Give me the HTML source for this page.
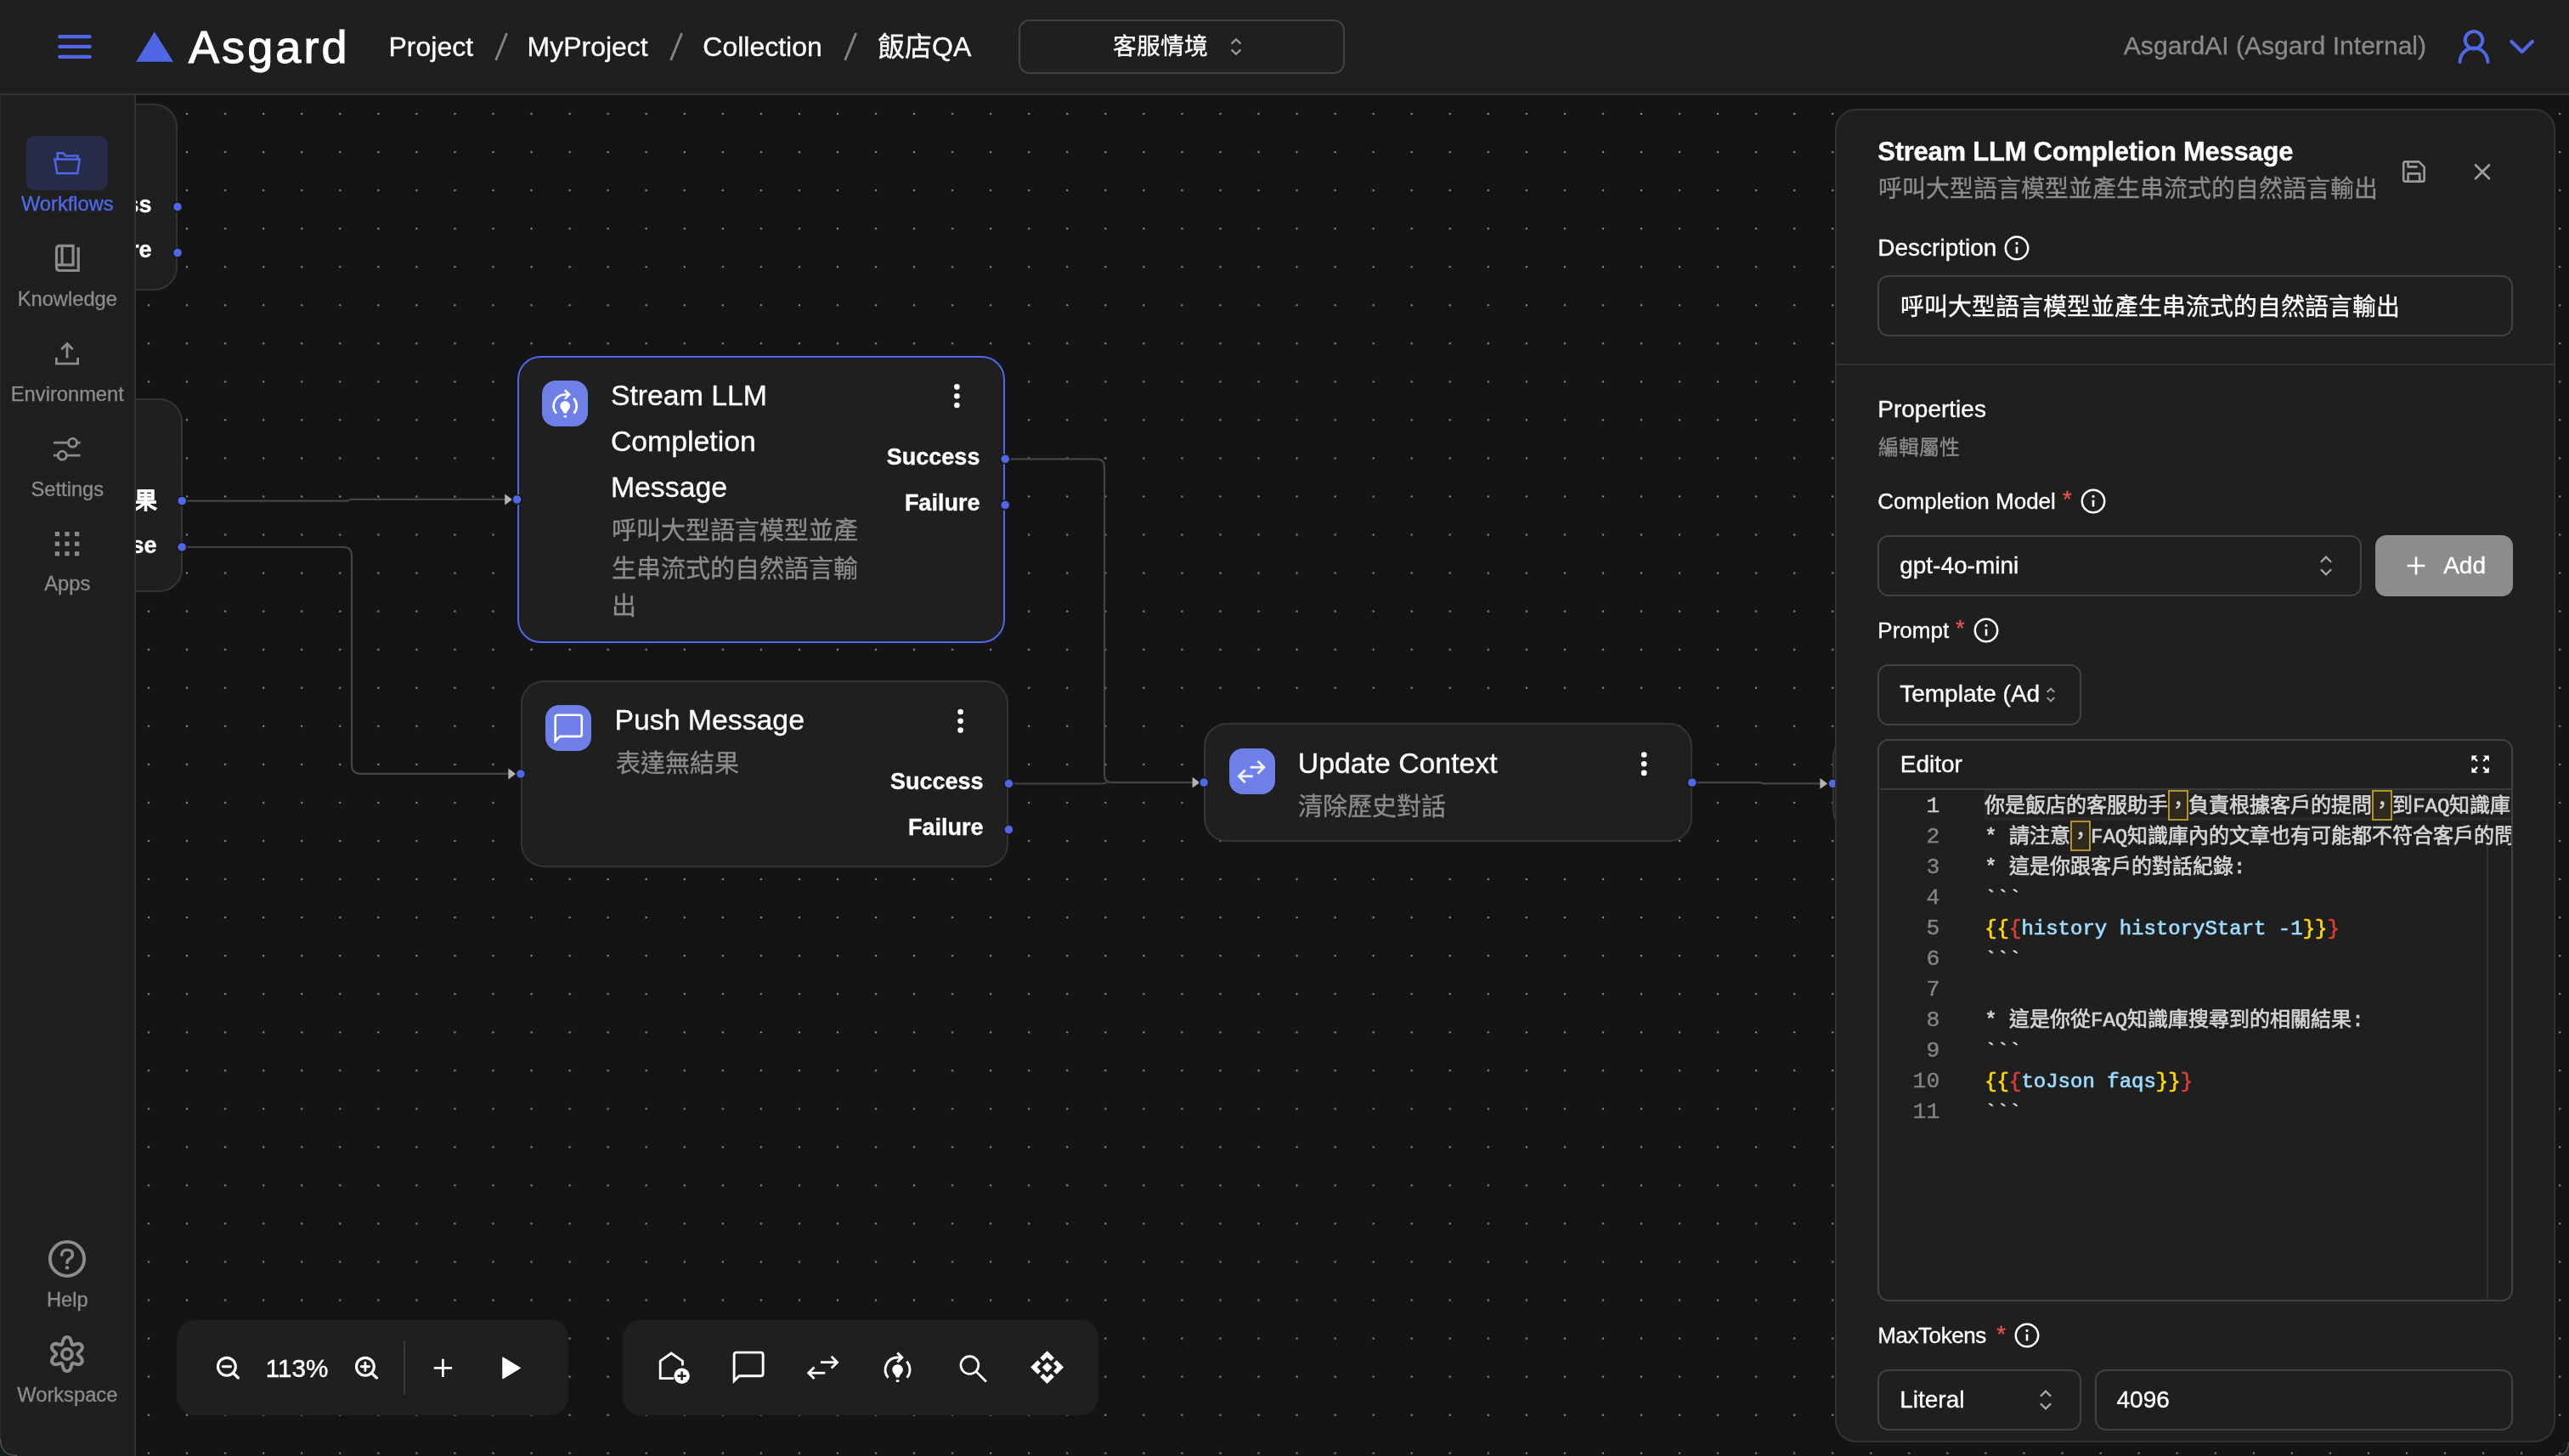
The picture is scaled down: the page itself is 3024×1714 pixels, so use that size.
<!DOCTYPE html>
<html lang="zh-TW"><head><meta charset="utf-8"><title>Asgard</title>
<style>
html,body{margin:0;padding:0;}
body{width:3024px;height:1714px;overflow:hidden;background:#141414;font-family:"Liberation Sans", sans-serif;position:relative;-webkit-font-smoothing:antialiased;-webkit-text-stroke:0.02em;}
div,svg{box-sizing:border-box;}
</style></head><body>
<div id="root" style="position:absolute;left:0;top:0;width:3024px;height:1714px;will-change:transform;">
<svg style="position:absolute;left:0;top:0" width="3024" height="1714">
<defs><pattern id="dots" x="197.575" y="111.475" width="45.05" height="45.05" patternUnits="userSpaceOnUse">
<circle cx="22.525" cy="22.525" r="1.22" fill="#8a8a8a"/></pattern></defs>
<rect width="3024" height="1714" fill="url(#dots)"/></svg>
<svg style="position:absolute;left:0;top:0" width="3024" height="1714">
<g stroke="#444444" stroke-width="2.2" fill="none">
<path d="M214 589.7 H409 C411.5 589.7 410.5 587.9 413 587.9 H596"/>
<path d="M214 644 H404 Q414 644 414 654 V900.8 Q414 910.8 424 910.8 H600"/>
<path d="M1183 540.3 H1291 Q1300 540.3 1300 549.3 V912.2 Q1300 921.2 1309 921.2 H1405"/>
<path d="M1187 922.5 H1296 Q1300 922.5 1303 921.2"/>
<path d="M1992 921.2 H2071 C2074 921.2 2073 922.4 2076 922.4 H2146"/>
</g>
<path d="M594.2 581.6 L603.0 588.0 L594.2 594.4 Z" fill="#b4b4b4"/><path d="M598.4 904.6 L607.2 911.0 L598.4 917.4 Z" fill="#b4b4b4"/><path d="M1403.6 914.8 L1412.4 921.2 L1403.6 927.6 Z" fill="#b4b4b4"/><path d="M2142.4 916.0 L2151.2 922.4 L2142.4 928.8 Z" fill="#b4b4b4"/>
</svg>
<div style="position:absolute;left:-200.00px;top:122.40px;width:409.20px;height:220.00px;box-sizing:border-box;background:#1f1f1f;border:2.25px solid #343434;border-radius:27.5px;"></div>
<div style="position:absolute;top:226px;line-height:30px;height:30px;font-size:27px;color:#fff;white-space:pre;font-weight:700;right:2845.40px;">Success</div>
<div style="position:absolute;top:279px;line-height:30px;height:30px;font-size:27px;color:#fff;white-space:pre;font-weight:700;right:2845.40px;">Failure</div>
<div style="position:absolute;left:-200.00px;top:469.00px;width:414.60px;height:228.20px;box-sizing:border-box;background:#1f1f1f;border:2.25px solid #343434;border-radius:27.5px;"></div>
<div style="position:absolute;top:575px;line-height:30px;height:30px;font-size:27px;color:#fff;white-space:pre;font-weight:700;right:2839.50px;">有結果</div>
<div style="position:absolute;top:627px;line-height:30px;height:30px;font-size:27px;color:#fff;white-space:pre;font-weight:700;right:2839.50px;">Else</div>
<div style="position:absolute;left:2157.40px;top:864.00px;width:542.60px;height:117.00px;box-sizing:border-box;background:#1f1f1f;border:2.25px solid #343434;border-radius:27.5px;"></div>
<div style="position:absolute;left:608.50px;top:418.50px;width:574.80px;height:338.40px;box-sizing:border-box;background:#1f1f1f;border:2.25px solid #4f67e8;border-radius:27.5px;"></div>
<div style="position:absolute;left:638.0px;top:448.0px;width:54.0px;height:54.0px;border-radius:16px;background:#6e80e8;"></div>
<svg style="position:absolute;left:644.75px;top:456.35px;" width="40.50" height="40.50" viewBox="0 0 24 24" fill="none"><g stroke="#fff" stroke-width="1.55" fill="none" stroke-linecap="butt" stroke-linejoin="miter"><path d="M5.9 18.2 A8 8 0 0 1 12 5 H14.4"/><path d="M11.8 1.9 L14.9 5 L11.8 8.1"/><path d="M17.9 7.6 A8 8 0 0 1 18.1 18.2"/></g><path d="M12 9.6c-1.95 0-3.5 1.55-3.5 3.5 0 2 2.4 3.4 2.5 5.0h2c.1-1.6 2.5-3 2.5-5 0-1.95-1.55-3.5-3.5-3.5z" fill="#fff"/><rect x="11" y="19.6" width="2" height="1.5" rx=".4" fill="#fff"/></svg>
<div style="position:absolute;top:446px;line-height:38px;height:38px;font-size:33.8px;color:#fff;white-space:pre;left:718.90px;">Stream LLM</div>
<div style="position:absolute;top:500px;line-height:38px;height:38px;font-size:33.8px;color:#fff;white-space:pre;left:718.90px;">Completion</div>
<div style="position:absolute;top:554px;line-height:38px;height:38px;font-size:33.8px;color:#fff;white-space:pre;left:718.90px;">Message</div>
<div style="position:absolute;top:609px;line-height:32px;height:32px;font-size:29px;color:#8c8c8c;white-space:pre;left:720.00px;">呼叫大型語言模型並產</div>
<div style="position:absolute;top:654px;line-height:32px;height:32px;font-size:29px;color:#8c8c8c;white-space:pre;left:720.00px;">生串流式的自然語言輸</div>
<div style="position:absolute;top:698px;line-height:32px;height:32px;font-size:29px;color:#8c8c8c;white-space:pre;left:720.00px;">出</div>
<div style="position:absolute;top:523px;line-height:30px;height:30px;font-size:27px;color:#fff;white-space:pre;font-weight:700;right:1870.60px;">Success</div>
<div style="position:absolute;top:577px;line-height:30px;height:30px;font-size:27px;color:#fff;white-space:pre;font-weight:700;right:1870.60px;">Failure</div>
<svg style="position:absolute;left:0;top:0" width="3024" height="1714"><circle cx="1126.4" cy="455.4" r="3.3" fill="#fff"/><circle cx="1126.4" cy="466.2" r="3.3" fill="#fff"/><circle cx="1126.4" cy="477.0" r="3.3" fill="#fff"/></svg>
<div style="position:absolute;left:612.80px;top:800.70px;width:574.50px;height:220.60px;box-sizing:border-box;background:#1f1f1f;border:2.25px solid #343434;border-radius:27.5px;"></div>
<div style="position:absolute;left:641.8px;top:830.0px;width:54.0px;height:54.0px;border-radius:16px;background:#6e80e8;"></div>
<svg style="position:absolute;left:648.55px;top:836.75px;" width="40.50" height="40.50" viewBox="0 0 24 24" fill="none"><path d="M4.3 2.78 H19.7 Q21.22 2.78 21.22 4.3 V16.2 Q21.22 17.72 19.7 17.72 H6 L2.78 20.9 V4.3 Q2.78 2.78 4.3 2.78 Z" stroke="#fff" stroke-width="1.55" fill="none" stroke-linejoin="miter"/></svg>
<div style="position:absolute;top:828px;line-height:38px;height:38px;font-size:33.8px;color:#fff;white-space:pre;left:723.40px;">Push Message</div>
<div style="position:absolute;top:883px;line-height:32px;height:32px;font-size:29px;color:#8c8c8c;white-space:pre;left:724.50px;">表達無結果</div>
<div style="position:absolute;top:905px;line-height:30px;height:30px;font-size:27px;color:#fff;white-space:pre;font-weight:700;right:1866.50px;">Success</div>
<div style="position:absolute;top:959px;line-height:30px;height:30px;font-size:27px;color:#fff;white-space:pre;font-weight:700;right:1866.50px;">Failure</div>
<svg style="position:absolute;left:0;top:0" width="3024" height="1714"><circle cx="1130.6" cy="838.0" r="3.3" fill="#fff"/><circle cx="1130.6" cy="848.8" r="3.3" fill="#fff"/><circle cx="1130.6" cy="859.6" r="3.3" fill="#fff"/></svg>
<div style="position:absolute;left:1417.20px;top:851.40px;width:575.20px;height:140.00px;box-sizing:border-box;background:#1f1f1f;border:2.25px solid #343434;border-radius:27.5px;"></div>
<div style="position:absolute;left:1446.6px;top:880.8px;width:54.0px;height:54.0px;border-radius:16px;background:#6e80e8;"></div>
<svg style="position:absolute;left:1453.35px;top:887.55px;" width="40.50" height="40.50" viewBox="0 0 24 24" fill="none"><g stroke="#f2f3ff" stroke-width="1.66" fill="none" stroke-linecap="butt" stroke-linejoin="miter"><path d="M11.05 9.04 H20.4"/><path d="M16.25 4.64 L20.65 9.04 L16.25 13.44"/><path d="M12.95 15.3 H3.4"/><path d="M7.55 10.9 L3.15 15.3 L7.55 19.7"/></g></svg>
<div style="position:absolute;top:879px;line-height:38px;height:38px;font-size:33.8px;color:#fff;white-space:pre;left:1527.80px;">Update Context</div>
<div style="position:absolute;top:934px;line-height:32px;height:32px;font-size:29px;color:#8c8c8c;white-space:pre;left:1528.40px;">清除歷史對話</div>
<svg style="position:absolute;left:0;top:0" width="3024" height="1714"><circle cx="1935.2" cy="888.5" r="3.3" fill="#fff"/><circle cx="1935.2" cy="899.2" r="3.3" fill="#fff"/><circle cx="1935.2" cy="909.9" r="3.3" fill="#fff"/></svg>
<svg style="position:absolute;left:0;top:0" width="3024" height="1714"><circle cx="209.0" cy="243.5" r="6.3" fill="#191919"/><circle cx="209.0" cy="243.5" r="4.75" fill="#4f67e8"/><circle cx="209.0" cy="297.6" r="6.3" fill="#191919"/><circle cx="209.0" cy="297.6" r="4.75" fill="#4f67e8"/><circle cx="214.2" cy="589.7" r="6.3" fill="#191919"/><circle cx="214.2" cy="589.7" r="4.75" fill="#4f67e8"/><circle cx="214.2" cy="644.0" r="6.3" fill="#191919"/><circle cx="214.2" cy="644.0" r="4.75" fill="#4f67e8"/><circle cx="2157.5" cy="922.4" r="6.3" fill="#191919"/><circle cx="2157.5" cy="922.4" r="4.75" fill="#4f67e8"/><circle cx="608.6" cy="588.1" r="6.3" fill="#191919"/><circle cx="608.6" cy="588.1" r="4.75" fill="#4f67e8"/><circle cx="1183.2" cy="540.3" r="6.3" fill="#191919"/><circle cx="1183.2" cy="540.3" r="4.75" fill="#4f67e8"/><circle cx="1183.2" cy="594.5" r="6.3" fill="#191919"/><circle cx="1183.2" cy="594.5" r="4.75" fill="#4f67e8"/><circle cx="612.9" cy="911.0" r="6.3" fill="#191919"/><circle cx="612.9" cy="911.0" r="4.75" fill="#4f67e8"/><circle cx="1187.4" cy="922.5" r="6.3" fill="#191919"/><circle cx="1187.4" cy="922.5" r="4.75" fill="#4f67e8"/><circle cx="1187.4" cy="976.6" r="6.3" fill="#191919"/><circle cx="1187.4" cy="976.6" r="4.75" fill="#4f67e8"/><circle cx="1417.2" cy="921.2" r="6.3" fill="#191919"/><circle cx="1417.2" cy="921.2" r="4.75" fill="#4f67e8"/><circle cx="1991.8" cy="921.2" r="6.3" fill="#191919"/><circle cx="1991.8" cy="921.2" r="4.75" fill="#4f67e8"/></svg>
<div style="position:absolute;left:208.00px;top:1553.80px;width:461.20px;height:112.00px;box-sizing:border-box;background:#1f1f1f;border-radius:21px;"></div>
<div style="position:absolute;left:733.00px;top:1553.80px;width:560.00px;height:112.00px;box-sizing:border-box;background:#1f1f1f;border-radius:21px;"></div>
<svg style="position:absolute;left:253.60px;top:1595.60px;" width="28.00" height="28.00" viewBox="-1 -1 28 28" fill="none"><g stroke="#fff" fill="none" stroke-width="3.1"><circle cx="11.9" cy="11.8" r="10.45"/><path d="M19.4 19.3 L25.4 25.0" stroke-linecap="round" stroke-width="3.2"/><path d="M7.2 11.8 H16.6" stroke-linecap="round" stroke-width="2.9"/></g></svg>
<div style="position:absolute;top:1594px;line-height:33px;height:33px;font-size:29.6px;color:#fff;white-space:pre;left:-650.40px;width:2000px;text-align:center;-webkit-text-stroke:0.45px #fff;">113%</div>
<svg style="position:absolute;left:417.20px;top:1595.60px;" width="28.00" height="28.00" viewBox="-1 -1 28 28" fill="none"><g stroke="#fff" fill="none" stroke-width="3.1"><circle cx="11.9" cy="11.8" r="10.45"/><path d="M19.4 19.3 L25.4 25.0" stroke-linecap="round" stroke-width="3.2"/><path d="M7.2 11.8 H16.6" stroke-linecap="round" stroke-width="2.9"/><path d="M11.9 7.1 V16.5" stroke-linecap="round" stroke-width="2.9"/></g></svg>
<div style="position:absolute;left:474.70px;top:1578.40px;width:2.00px;height:62.80px;box-sizing:border-box;background:#3a3a3a;"></div>
<svg style="position:absolute;left:508.00px;top:1597.00px;" width="27.00" height="27.00" viewBox="0 0 27 27" fill="none"><g stroke="#fff" fill="none" stroke-width="2.7"><path d="M13.4 2.7 V24.1 M2.7 13.4 H24.1"/></g></svg>
<svg style="position:absolute;left:588.00px;top:1595.00px;" width="30.00" height="32.00" viewBox="0 0 30 32" fill="none"><path d="M3.8 2.8 L24.6 15.4 L3.8 28.0 Z" fill="#fff" stroke="#fff" stroke-width="1" stroke-linejoin="round"/></svg>
<svg style="position:absolute;left:765.00px;top:1581.00px;" width="60.00" height="60.00" viewBox="0 0 60 60" fill="none"><g stroke="#fff" stroke-width="2.8" fill="none" stroke-linejoin="miter"><path d="M38.4 26.6 V21.2 L25.2 12 L12.2 21.2 V41.6 H28.2"/></g><circle cx="37.6" cy="38.7" r="9.2" fill="#fff"/><path d="M37.6 33.6 V43.8 M32.5 38.7 H42.7" stroke="#1f1f1f" stroke-width="2.5"/></svg>
<svg style="position:absolute;left:858.75px;top:1587.45px;" width="44.30" height="44.30" viewBox="0 0 24 24" fill="none"><path d="M4.3 2.78 H19.7 Q21.22 2.78 21.22 4.3 V16.2 Q21.22 17.72 19.7 17.72 H6 L2.78 20.9 V4.3 Q2.78 2.78 4.3 2.78 Z" stroke="#fff" stroke-width="1.55" fill="none" stroke-linejoin="miter"/></svg>
<svg style="position:absolute;left:947.20px;top:1590.40px;" width="43.20" height="43.20" viewBox="0 0 24 24" fill="none"><g stroke="#fff" stroke-width="1.55" fill="none"><path d="M10.5 7.6 H21.4"/><path d="M17.6 3.8 L21.4 7.6 L17.6 11.4"/><path d="M13.5 14.6 H2.6"/><path d="M6.4 10.8 L2.6 14.6 L6.4 18.4"/></g></svg>
<svg style="position:absolute;left:1035.20px;top:1589.40px;" width="43.20" height="43.20" viewBox="0 0 24 24" fill="none"><g stroke="#fff" stroke-width="1.6" fill="none" stroke-linecap="butt" stroke-linejoin="miter"><path d="M5.9 18.2 A8 8 0 0 1 12 5 H14.4"/><path d="M11.8 1.9 L14.9 5 L11.8 8.1"/><path d="M17.9 7.6 A8 8 0 0 1 18.1 18.2"/></g><path d="M12 9.6c-1.95 0-3.5 1.6-3.5 3.5 0 2 2.4 3.4 2.5 5.0h2c.1-1.6 2.5-3 2.5-5 0-1.95-1.6-3.5-3.5-3.5z" fill="#fff"/><rect x="11" y="19.6" width="2" height="1.5" rx=".4" fill="#fff"/></svg>
<svg style="position:absolute;left:1124.80px;top:1590.70px;" width="41.00" height="41.00" viewBox="0 0 24 24" fill="none"><g stroke="#fff" stroke-width="1.55" fill="none" stroke-width="1.7"><circle cx="9.6" cy="9.4" r="6.1"/><path d="M13.9 13.7 L21 20.8"/></g></svg>
<svg style="position:absolute;left:1211.30px;top:1588.40px;" width="43.20" height="43.20" viewBox="0 0 24 24" fill="none"><path d="M12 1.2 L16.6 5.8 L14.5 7.9 L12 5.4 L9.5 7.9 L7.4 5.8 Z M12 22.8 L7.4 18.2 L9.5 16.1 L12 18.6 L14.5 16.1 L16.6 18.2 Z M1.2 12 L5.8 7.4 L7.9 9.5 L5.4 12 L7.9 14.5 L5.8 16.6 Z M22.8 12 L18.2 16.6 L16.1 14.5 L18.6 12 L16.1 9.5 L18.2 7.4 Z M12 8.7 L15.3 12 L12 15.3 L8.7 12 Z" fill="#fff"/></svg>
<div style="position:absolute;left:0.00px;top:0.00px;width:3024.00px;height:112.00px;box-sizing:border-box;background:#1f1f1f;border-bottom:2px solid #343434;"></div>
<svg style="position:absolute;left:64.00px;top:36.00px;" width="48.00" height="40.00" viewBox="0 0 48 40" fill="none"><g stroke="#4f67e8" stroke-width="4.2" stroke-linecap="round"><path d="M6.2 7.1 H41.8 M6.2 18.9 H41.8 M6.2 30.9 H41.8"/></g></svg>
<svg style="position:absolute;left:158.00px;top:34.00px;" width="50.00" height="42.00" viewBox="0 0 50 42" fill="none"><path d="M2.2 38.8 L23.8 3.4 L46.1 38.8 Z" fill="#4f66e5"/></svg>
<div style="position:absolute;top:25px;line-height:60px;height:60px;font-size:54px;color:#fff;white-space:pre;letter-spacing:3.1px;left:222.00px;-webkit-text-stroke:1.1px #fff;">Asgard</div>
<div style="position:absolute;top:37px;line-height:36px;height:36px;font-size:32px;color:#fff;white-space:pre;left:457.50px;">Project</div>
<div style="position:absolute;top:37px;line-height:36px;height:36px;font-size:32px;color:#fff;white-space:pre;left:620.50px;">MyProject</div>
<div style="position:absolute;top:37px;line-height:36px;height:36px;font-size:32px;color:#fff;white-space:pre;left:827.30px;">Collection</div>
<div style="position:absolute;top:37px;line-height:36px;height:36px;font-size:32px;color:#fff;white-space:pre;left:1033.00px;">飯店QA</div>
<svg style="position:absolute;left:579.00px;top:36.00px;" width="24.00" height="40.00" viewBox="0 0 24 40" fill="none"><path d="M17.6 3 L4.6 35" stroke="#858585" stroke-width="2.8"/></svg>
<svg style="position:absolute;left:785.30px;top:36.00px;" width="24.00" height="40.00" viewBox="0 0 24 40" fill="none"><path d="M17.6 3 L4.6 35" stroke="#858585" stroke-width="2.8"/></svg>
<svg style="position:absolute;left:989.50px;top:36.00px;" width="24.00" height="40.00" viewBox="0 0 24 40" fill="none"><path d="M17.6 3 L4.6 35" stroke="#858585" stroke-width="2.8"/></svg>
<div style="position:absolute;left:1199.00px;top:23.40px;width:384.00px;height:63.20px;box-sizing:border-box;border:2px solid #414141;border-radius:13px;"></div>
<div style="position:absolute;top:39px;line-height:31px;height:31px;font-size:27.8px;color:#fff;white-space:pre;left:1310.20px;">客服情境</div>
<svg style="position:absolute;left:1444.00px;top:42.00px;" width="22.00" height="26.00" viewBox="0 0 22 26" fill="none"><g stroke="#9a9a9a" stroke-width="2.2" fill="none"><path d="M5.6 9.6 L11 4.2 L16.4 9.6 M5.6 16.4 L11 21.8 L16.4 16.4"/></g></svg>
<div style="position:absolute;top:37px;line-height:33px;height:33px;font-size:30.1px;color:#8a8a8a;white-space:pre;left:2499.80px;">AsgardAI (Asgard Internal)</div>
<svg style="position:absolute;left:2888.00px;top:30.00px;" width="48.00" height="50.00" viewBox="0 0 48 50" fill="none"><g stroke="#4f67e8" stroke-width="4" fill="none" stroke-linecap="round"><circle cx="24" cy="17.2" r="10.2"/><path d="M7.6 43 A16.4 16.4 0 0 1 40.4 43"/></g></svg>
<svg style="position:absolute;left:2950.00px;top:42.00px;" width="38.00" height="26.00" viewBox="0 0 38 26" fill="none"><path d="M6.2 6.8 L18.6 19 L31 6.8" stroke="#4f67e8" stroke-width="4" fill="none" stroke-linecap="round" stroke-linejoin="round"/></svg>
<div style="position:absolute;left:0.00px;top:112.00px;width:160.00px;height:1602.00px;box-sizing:border-box;background:#1f1f1f;border-right:2px solid #343434;border-left:1px solid #2c2c2c;"></div>
<div style="position:absolute;left:31.00px;top:160.00px;width:96.00px;height:64.00px;box-sizing:border-box;background:#272b47;border-radius:9px;"></div>
<svg style="position:absolute;left:59.00px;top:172.00px;" width="40.00" height="40.00" viewBox="0 0 40 40" fill="none"><g stroke="#4f67e8" stroke-width="2.5" fill="none" stroke-linejoin="miter"><path d="M8.8 15.4 V8.3 H15.5 L18.3 11.4 H32.6 V15.4"/><path d="M5.4 15.6 H34.8 L32.2 32 H8.3 Z"/></g></svg>
<div style="position:absolute;top:227px;line-height:26px;height:26px;font-size:23.7px;color:#4f6bed;white-space:pre;left:-920.70px;width:2000px;text-align:center;">Workflows</div>
<svg style="position:absolute;left:59.00px;top:283.00px;" width="40.00" height="42.00" viewBox="0 0 40 42" fill="none"><g stroke="#8c8c8c" stroke-width="3.2" fill="none"><path d="M27.05 6.4 H11.4 Q7.5 6.4 7.5 10.3 V31.6 Q7.5 35.5 11.4 35.5 H33.25 V8"/><path d="M27.05 4.8 V28.9 H7.5"/><path d="M14.05 6.4 V28.9"/></g></svg>
<div style="position:absolute;top:339px;line-height:26px;height:26px;font-size:23.7px;color:#8c8c8c;white-space:pre;left:-920.70px;width:2000px;text-align:center;">Knowledge</div>
<svg style="position:absolute;left:59.00px;top:397.00px;" width="40.00" height="38.00" viewBox="0 0 40 38" fill="none"><g stroke="#8c8c8c" stroke-width="2.8" fill="none"><path d="M20 24.5 V8"/><path d="M13.3 14.2 L20 7.5 L26.7 14.2"/><path d="M7.4 24 V31.2 H32.6 V24"/></g></svg>
<div style="position:absolute;top:451px;line-height:26px;height:26px;font-size:23.7px;color:#8c8c8c;white-space:pre;left:-920.70px;width:2000px;text-align:center;">Environment</div>
<svg style="position:absolute;left:59.00px;top:508.00px;" width="40.00" height="40.00" viewBox="0 0 40 40" fill="none"><g stroke="#8c8c8c" stroke-width="2.8" fill="none"><path d="M4 13.2 H21.4 M31.6 13.2 H35.6"/><circle cx="26.5" cy="13.2" r="5"/><path d="M35.6 28.2 H19.4 M9.2 28.2 H4"/><circle cx="14.3" cy="28.2" r="5"/></g></svg>
<div style="position:absolute;top:563px;line-height:26px;height:26px;font-size:23.7px;color:#8c8c8c;white-space:pre;left:-920.70px;width:2000px;text-align:center;">Settings</div>
<svg style="position:absolute;left:59.00px;top:620.00px;" width="40.00" height="40.00" viewBox="0 0 40 40" fill="none"><rect x="5.8" y="6.0" width="5.2" height="5.2" fill="#8c8c8c"/><rect x="5.8" y="17.6" width="5.2" height="5.2" fill="#8c8c8c"/><rect x="5.8" y="29.2" width="5.2" height="5.2" fill="#8c8c8c"/><rect x="17.4" y="6.0" width="5.2" height="5.2" fill="#8c8c8c"/><rect x="17.4" y="17.6" width="5.2" height="5.2" fill="#8c8c8c"/><rect x="17.4" y="29.2" width="5.2" height="5.2" fill="#8c8c8c"/><rect x="29.0" y="6.0" width="5.2" height="5.2" fill="#8c8c8c"/><rect x="29.0" y="17.6" width="5.2" height="5.2" fill="#8c8c8c"/><rect x="29.0" y="29.2" width="5.2" height="5.2" fill="#8c8c8c"/></svg>
<div style="position:absolute;top:674px;line-height:26px;height:26px;font-size:23.7px;color:#8c8c8c;white-space:pre;left:-920.70px;width:2000px;text-align:center;">Apps</div>
<svg style="position:absolute;left:55.00px;top:1458.00px;" width="48.00" height="48.00" viewBox="0 0 48 48" fill="none"><g stroke="#8c8c8c" stroke-width="3.4" fill="none"><circle cx="24" cy="24" r="20.1" stroke-width="3.9"/><path d="M17.6 19.4 Q17.6 13.4 24 13.4 Q30.4 13.4 30.4 18.8 Q30.4 22 27 23.8 Q24 25.4 24 28.6" stroke-linecap="round"/></g><circle cx="24" cy="34.4" r="2.2" fill="#8c8c8c"/></svg>
<div style="position:absolute;top:1517px;line-height:26px;height:26px;font-size:23.7px;color:#8c8c8c;white-space:pre;left:-920.70px;width:2000px;text-align:center;">Help</div>
<svg style="position:absolute;left:55.00px;top:1570.00px;" width="48.00" height="48.00" viewBox="0 0 48 48" fill="none"><g stroke="#8c8c8c" stroke-width="4" fill="none" stroke-linejoin="round"><path d="M23.90 4.00 L24.77 4.06 L25.62 4.30 L26.43 4.77 L27.16 5.51 L27.79 6.46 L28.30 7.58 L28.70 8.79 L29.00 9.99 L29.25 11.09 L29.49 12.00 L29.79 12.68 L30.20 13.09 L30.76 13.24 L31.49 13.16 L32.41 12.91 L33.48 12.58 L34.67 12.24 L35.92 11.98 L37.14 11.86 L38.29 11.93 L39.28 12.20 L40.10 12.65 L40.74 13.27 L41.22 14.00 L41.61 14.78 L41.83 15.64 L41.81 16.58 L41.55 17.58 L41.03 18.60 L40.32 19.60 L39.47 20.55 L38.58 21.41 L37.76 22.18 L37.09 22.85 L36.65 23.44 L36.50 24.00 L36.65 24.56 L37.09 25.15 L37.76 25.82 L38.58 26.59 L39.47 27.45 L40.32 28.40 L41.03 29.40 L41.55 30.42 L41.81 31.42 L41.83 32.36 L41.61 33.22 L41.22 34.00 L40.74 34.73 L40.10 35.35 L39.28 35.80 L38.29 36.07 L37.14 36.14 L35.92 36.02 L34.67 35.76 L33.48 35.42 L32.41 35.09 L31.49 34.84 L30.76 34.76 L30.20 34.91 L29.79 35.32 L29.49 36.00 L29.25 36.91 L29.00 38.01 L28.70 39.21 L28.30 40.42 L27.79 41.54 L27.16 42.49 L26.43 43.23 L25.62 43.70 L24.77 43.94 L23.90 44.00 L23.03 43.94 L22.18 43.70 L21.37 43.23 L20.64 42.49 L20.01 41.54 L19.50 40.42 L19.10 39.21 L18.80 38.01 L18.55 36.91 L18.31 36.00 L18.01 35.32 L17.60 34.91 L17.04 34.76 L16.31 34.84 L15.39 35.09 L14.32 35.42 L13.13 35.76 L11.88 36.02 L10.66 36.14 L9.51 36.07 L8.52 35.80 L7.70 35.35 L7.06 34.73 L6.58 34.00 L6.19 33.22 L5.97 32.36 L5.99 31.42 L6.25 30.42 L6.77 29.40 L7.48 28.40 L8.33 27.45 L9.22 26.59 L10.04 25.82 L10.71 25.15 L11.15 24.56 L11.30 24.00 L11.15 23.44 L10.71 22.85 L10.04 22.18 L9.22 21.41 L8.33 20.55 L7.48 19.60 L6.77 18.60 L6.25 17.58 L5.99 16.58 L5.97 15.64 L6.19 14.78 L6.58 14.00 L7.06 13.27 L7.70 12.65 L8.52 12.20 L9.51 11.93 L10.66 11.86 L11.88 11.98 L13.13 12.24 L14.32 12.58 L15.39 12.91 L16.31 13.16 L17.04 13.24 L17.60 13.09 L18.01 12.68 L18.31 12.00 L18.55 11.09 L18.80 9.99 L19.10 8.79 L19.50 7.58 L20.01 6.46 L20.64 5.51 L21.37 4.77 L22.18 4.30 L23.03 4.06 Z"/><circle cx="23.9" cy="24" r="5.9"/></g></svg>
<div style="position:absolute;top:1629px;line-height:26px;height:26px;font-size:23.7px;color:#8c8c8c;white-space:pre;left:-920.70px;width:2000px;text-align:center;">Workspace</div>
<div style="position:absolute;left:2160.00px;top:128.00px;width:848.00px;height:1570.00px;box-sizing:border-box;background:#1f1f1f;border:2px solid #343434;border-radius:25px;"></div>
<div style="position:absolute;top:161px;line-height:35px;height:35px;font-size:31px;color:#fff;white-space:pre;font-weight:700;letter-spacing:-0.25px;left:2210.30px;">Stream LLM Completion Message</div>
<div style="position:absolute;top:207px;line-height:31px;height:31px;font-size:27.9px;color:#8c8c8c;white-space:pre;left:2211.00px;">呼叫大型語言模型並產生串流式的自然語言輸出</div>
<svg style="position:absolute;left:2824.00px;top:185.00px;" width="36.00" height="34.00" viewBox="0 0 36 34" fill="none"><g stroke="#9a9a9a" stroke-width="2.6" fill="none" stroke-linejoin="round"><path d="M7.4 5.4 H23.4 L29.6 11.6 V26.4 Q29.6 28.6 27.4 28.6 H7.4 Q5.2 28.6 5.2 26.4 V7.6 Q5.2 5.4 7.4 5.4 Z"/><path d="M10.6 5.6 V11.4 H21.6"/><path d="M10.6 28.4 V19.4 H24.2 V28.4"/></g></svg>
<svg style="position:absolute;left:2908.00px;top:188.00px;" width="28.00" height="28.00" viewBox="0 0 28 28" fill="none"><path d="M6 6.2 L22 22.2 M22 6.2 L6 22.2" stroke="#9e9e9e" stroke-width="2.7" stroke-linecap="round"/></svg>
<div style="position:absolute;top:276px;line-height:31px;height:31px;font-size:28px;color:#fff;white-space:pre;left:2210.30px;">Description</div>
<svg style="position:absolute;left:2358.00px;top:275.90px;" width="32.00" height="32.00" viewBox="0 0 32 32" fill="none"><circle cx="16" cy="16" r="13.2" stroke="#fff" stroke-width="2.5" fill="none"/><path d="M16 14.6 V22.4" stroke="#fff" stroke-width="2.6"/><circle cx="16" cy="10.4" r="1.6" fill="#fff"/></svg>
<div style="position:absolute;left:2210.00px;top:324.00px;width:748.00px;height:72.00px;box-sizing:border-box;border:2px solid #414141;border-radius:13px;"></div>
<div style="position:absolute;top:346px;line-height:31px;height:31px;font-size:27.9px;color:#fff;white-space:pre;left:2237.40px;">呼叫大型語言模型並產生串流式的自然語言輸出</div>
<div style="position:absolute;left:2162.00px;top:427.80px;width:844.00px;height:2.00px;box-sizing:border-box;background:#343434;"></div>
<div style="position:absolute;top:466px;line-height:31px;height:31px;font-size:28px;color:#fff;white-space:pre;left:2210.30px;">Properties</div>
<div style="position:absolute;top:513px;line-height:27px;height:27px;font-size:23.8px;color:#8c8c8c;white-space:pre;left:2210.50px;">編輯屬性</div>
<div style="position:absolute;top:575px;line-height:30px;height:30px;font-size:26px;color:#fff;white-space:pre;left:2210.30px;">Completion Model</div>
<div style="position:absolute;top:572px;line-height:31px;height:31px;font-size:27.5px;color:#e5534b;white-space:pre;left:2428.10px;">*</div>
<svg style="position:absolute;left:2448.00px;top:574.20px;" width="32.00" height="32.00" viewBox="0 0 32 32" fill="none"><circle cx="16" cy="16" r="13.2" stroke="#fff" stroke-width="2.5" fill="none"/><path d="M16 14.6 V22.4" stroke="#fff" stroke-width="2.6"/><circle cx="16" cy="10.4" r="1.6" fill="#fff"/></svg>
<div style="position:absolute;left:2210.00px;top:630.00px;width:569.60px;height:72.00px;box-sizing:border-box;border:2px solid #414141;border-radius:13px;"></div>
<div style="position:absolute;top:650px;line-height:31px;height:31px;font-size:28px;color:#fff;white-space:pre;left:2236.20px;">gpt-4o-mini</div>
<svg style="position:absolute;left:2726.00px;top:650.00px;" width="24.00" height="32.00" viewBox="0 0 24 32" fill="none"><path d="M-6.1 -4.200000000000001 L0 -10.3 L6.1 -4.200000000000001 M-6.1 4.200000000000001 L0 10.3 L6.1 4.200000000000001" transform="translate(12 16)" stroke="#a6a6a6" stroke-width="2.3" fill="none"/></svg>
<div style="position:absolute;left:2796.00px;top:630.00px;width:162.00px;height:72.00px;box-sizing:border-box;background:#8c8c8c;border-radius:13px;"></div>
<svg style="position:absolute;left:2830.00px;top:652.00px;" width="28.00" height="28.00" viewBox="0 0 28 28" fill="none"><path d="M14 3.6 V24.4 M3.6 14 H24.4" stroke="#fff" stroke-width="2.6"/></svg>
<div style="position:absolute;top:650px;line-height:31px;height:31px;font-size:28px;color:#fff;white-space:pre;left:2876.20px;">Add</div>
<div style="position:absolute;top:727px;line-height:30px;height:30px;font-size:26px;color:#fff;white-space:pre;left:2210.30px;">Prompt</div>
<div style="position:absolute;top:724px;line-height:31px;height:31px;font-size:27.5px;color:#e5534b;white-space:pre;left:2302.10px;">*</div>
<svg style="position:absolute;left:2322.00px;top:725.90px;" width="32.00" height="32.00" viewBox="0 0 32 32" fill="none"><circle cx="16" cy="16" r="13.2" stroke="#fff" stroke-width="2.5" fill="none"/><path d="M16 14.6 V22.4" stroke="#fff" stroke-width="2.6"/><circle cx="16" cy="10.4" r="1.6" fill="#fff"/></svg>
<div style="position:absolute;left:2210.00px;top:782.00px;width:240.00px;height:72.00px;box-sizing:border-box;border:2px solid #414141;border-radius:13px;"></div>
<div style="position:absolute;left:2230px;top:790px;width:170.4px;height:56px;overflow:hidden;"><div style="position:absolute;left:6.2px;top:9.20px;line-height:36.4px;font-size:28px;color:#fff;white-space:pre;">Template (Advanced)</div></div>
<svg style="position:absolute;left:2401.70px;top:802.00px;" width="24.00" height="32.00" viewBox="0 0 24 32" fill="none"><path d="M-4.3 -3.1000000000000005 L0 -7.4 L4.3 -3.1000000000000005 M-4.3 3.1000000000000005 L0 7.4 L4.3 3.1000000000000005" transform="translate(12 16)" stroke="#a6a6a6" stroke-width="1.9" fill="none"/></svg>
<div style="position:absolute;left:2210.00px;top:870.00px;width:748.00px;height:662.00px;box-sizing:border-box;border:2px solid #414141;border-radius:13px;"></div>
<div style="position:absolute;top:884px;line-height:31px;height:31px;font-size:28px;color:#fff;white-space:pre;left:2236.80px;">Editor</div>
<svg style="position:absolute;left:2906.40px;top:886.30px;" width="27.20" height="27.20" viewBox="0 0 24 24" fill="none"><path d="M15 3l2.3 2.3-2.89 2.87 1.42 1.42L18.7 6.7 21 9V3zM3 9l2.3-2.3 2.87 2.89 1.42-1.42L6.7 5.3 9 3H3zm6 12l-2.3-2.3 2.89-2.87-1.42-1.42L5.3 17.3 3 15v6zm12-6l-2.3 2.3-2.87-2.89-1.42 1.42 2.89 2.87L15 21h6z" fill="#fff"/></svg>
<div style="position:absolute;left:2212.50px;top:928.10px;width:743.50px;height:2.10px;box-sizing:border-box;background:#3c3c3c;"></div>
<div style="position:absolute;left:2212.5px;top:930.2px;width:743.5px;height:599.2px;overflow:hidden;font-family:'Liberation Mono', monospace;font-size:24px;line-height:36px;color:#d4d4d4;white-space:pre;-webkit-text-stroke:0.7px;"><div style="position:absolute;left:123.5px;top:0.3px;width:640px;height:35.6px;border:4px solid #282828;"></div><div style="position:absolute;left:714.6px;top:36px;width:1.6px;height:580px;background:#343434;"></div><div style="position:absolute;left:339.5px;top:-0.1px;width:24.2px;height:36px;border:2px solid #b2922a;background:#2e2a1e;"></div><div style="position:absolute;left:579.5px;top:-0.1px;width:24.2px;height:36px;border:2px solid #b2922a;background:#2e2a1e;"></div><div style="position:absolute;left:224.3px;top:35.9px;width:24.2px;height:36px;border:2px solid #b2922a;background:#2e2a1e;"></div><div style="position:absolute;left:0;top:1.2px;width:70.8px;text-align:right;color:#cccccc;font-size:26.4px;-webkit-text-stroke:0.4px;">1</div><div style="position:absolute;left:123.7px;top:2.2px;">你是飯店的客服助手，負責根據客戶的提問，到FAQ知識庫中搜尋相關</div><div style="position:absolute;left:0;top:37.2px;width:70.8px;text-align:right;color:#858585;font-size:26.4px;-webkit-text-stroke:0.4px;">2</div><div style="position:absolute;left:123.7px;top:38.2px;">* 請注意，FAQ知識庫內的文章也有可能都不符合客戶的問題</div><div style="position:absolute;left:0;top:73.2px;width:70.8px;text-align:right;color:#858585;font-size:26.4px;-webkit-text-stroke:0.4px;">3</div><div style="position:absolute;left:123.7px;top:74.2px;">* 這是你跟客戶的對話紀錄:</div><div style="position:absolute;left:0;top:109.2px;width:70.8px;text-align:right;color:#858585;font-size:26.4px;-webkit-text-stroke:0.4px;">4</div><div style="position:absolute;left:123.7px;top:110.2px;">```</div><div style="position:absolute;left:0;top:145.2px;width:70.8px;text-align:right;color:#858585;font-size:26.4px;-webkit-text-stroke:0.4px;">5</div><div style="position:absolute;left:123.7px;top:146.2px;"><span style="color:#ffd700">{{</span><span style="color:#dc3e34">{</span><span style="color:#9cdcfe">history historyStart -1</span><span style="color:#ffd700">}}</span><span style="color:#dc3e34">}</span></div><div style="position:absolute;left:0;top:181.2px;width:70.8px;text-align:right;color:#858585;font-size:26.4px;-webkit-text-stroke:0.4px;">6</div><div style="position:absolute;left:123.7px;top:182.2px;">```</div><div style="position:absolute;left:0;top:217.2px;width:70.8px;text-align:right;color:#858585;font-size:26.4px;-webkit-text-stroke:0.4px;">7</div><div style="position:absolute;left:123.7px;top:218.2px;"></div><div style="position:absolute;left:0;top:253.2px;width:70.8px;text-align:right;color:#858585;font-size:26.4px;-webkit-text-stroke:0.4px;">8</div><div style="position:absolute;left:123.7px;top:254.2px;">* 這是你從FAQ知識庫搜尋到的相關結果:</div><div style="position:absolute;left:0;top:289.2px;width:70.8px;text-align:right;color:#858585;font-size:26.4px;-webkit-text-stroke:0.4px;">9</div><div style="position:absolute;left:123.7px;top:290.2px;">```</div><div style="position:absolute;left:0;top:325.2px;width:70.8px;text-align:right;color:#858585;font-size:26.4px;-webkit-text-stroke:0.4px;">10</div><div style="position:absolute;left:123.7px;top:326.2px;"><span style="color:#ffd700">{{</span><span style="color:#dc3e34">{</span><span style="color:#9cdcfe">toJson faqs</span><span style="color:#ffd700">}}</span><span style="color:#dc3e34">}</span></div><div style="position:absolute;left:0;top:361.2px;width:70.8px;text-align:right;color:#858585;font-size:26.4px;-webkit-text-stroke:0.4px;">11</div><div style="position:absolute;left:123.7px;top:362.2px;">```</div></div>
<div style="position:absolute;top:1557px;line-height:30px;height:30px;font-size:26px;color:#fff;white-space:pre;letter-spacing:-0.45px;left:2210.30px;">MaxTokens</div>
<div style="position:absolute;top:1555px;line-height:31px;height:31px;font-size:27.5px;color:#e5534b;white-space:pre;left:2350.30px;">*</div>
<svg style="position:absolute;left:2369.80px;top:1555.90px;" width="32.00" height="32.00" viewBox="0 0 32 32" fill="none"><circle cx="16" cy="16" r="13.2" stroke="#fff" stroke-width="2.5" fill="none"/><path d="M16 14.6 V22.4" stroke="#fff" stroke-width="2.6"/><circle cx="16" cy="10.4" r="1.6" fill="#fff"/></svg>
<div style="position:absolute;left:2210.00px;top:1612.00px;width:240.00px;height:72.00px;box-sizing:border-box;border:2px solid #414141;border-radius:13px;"></div>
<div style="position:absolute;top:1632px;line-height:31px;height:31px;font-size:28px;color:#fff;white-space:pre;left:2236.20px;">Literal</div>
<svg style="position:absolute;left:2396.00px;top:1632.20px;" width="24.00" height="32.00" viewBox="0 0 24 32" fill="none"><path d="M-6.1 -4.200000000000001 L0 -10.3 L6.1 -4.200000000000001 M-6.1 4.200000000000001 L0 10.3 L6.1 4.200000000000001" transform="translate(12 16)" stroke="#a6a6a6" stroke-width="2.3" fill="none"/></svg>
<div style="position:absolute;left:2466.00px;top:1612.00px;width:492.00px;height:72.00px;box-sizing:border-box;border:2px solid #414141;border-radius:13px;"></div>
<div style="position:absolute;top:1632px;line-height:31px;height:31px;font-size:28px;color:#fff;white-space:pre;left:2491.50px;">4096</div>
<svg style="position:absolute;left:0.00px;top:1694.00px;" width="20.00" height="20.00" viewBox="0 0 20 20" fill="none"><path d="M0 0 V20 H20 Q0 20 0 0 Z" fill="#152016" transform="translate(0 0)"/><path d="M0.6 0 Q0.6 19.4 20 19.4" stroke="#5a5a5a" stroke-width="1.1" fill="none"/></svg>
<svg style="position:absolute;left:3008.00px;top:1698.00px;" width="16.00" height="16.00" viewBox="0 0 16 16" fill="none"><path d="M16 0 V16 H0 Q16 16 16 0 Z" fill="#232823"/><path d="M15.4 0 Q15.4 15.4 0 15.4" stroke="#5a5a5a" stroke-width="1.1" fill="none"/></svg>
</div>
</body></html>
